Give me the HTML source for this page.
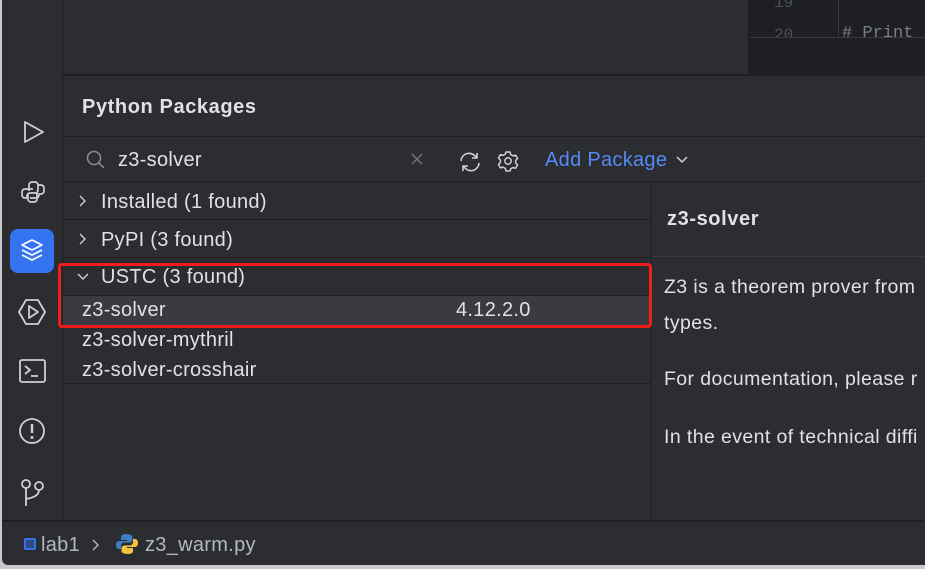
<!DOCTYPE html>
<html><head><style>
*{margin:0;padding:0;box-sizing:border-box}
body{width:925px;height:569px;background:#c8c9cc;position:relative;overflow:hidden;font-family:"Liberation Sans",sans-serif;color:#dfe1e5}
.win{position:absolute;left:2px;top:0;width:923px;height:565px;background:#2b2d30;border-bottom-left-radius:6px;overflow:hidden}
.abs{position:absolute}
.t{position:absolute;white-space:nowrap;font-size:20px;letter-spacing:0.3px}
.d{font-size:19.5px;letter-spacing:0.4px}
.hl{position:absolute;height:1px;background:#1e1f22}
svg{position:absolute;overflow:visible}
</style></head><body>
<div class="win">
 <div class="abs" style="left:60px;top:0;width:1px;height:520px;background:#1e1f22"></div>
 <div class="abs" style="left:746px;top:0;width:177px;height:74px;background:#1e1f22"></div>
 <div class="abs" style="left:836px;top:0;width:1px;height:38px;background:#393b40"></div>
 <div class="abs" style="left:748px;top:37px;width:175px;height:1px;background:#393b40"></div>
 <div class="t" style="left:772px;top:-6px;font-family:'Liberation Mono',monospace;font-size:16px;color:#4b5059;letter-spacing:0">19</div>
 <div class="t" style="left:772px;top:26px;font-family:'Liberation Mono',monospace;font-size:16px;color:#4b5059;height:11px;overflow:hidden;letter-spacing:0">20</div>
 <div class="t" style="left:840px;top:24px;font-family:'Liberation Mono',monospace;font-size:17px;color:#7a7e85;height:13px;overflow:hidden;letter-spacing:0"># Print</div>
 <div class="hl" style="left:61px;top:74px;width:862px;height:2px"></div>
 <div class="t" style="left:80px;top:96px;font-size:20px;font-weight:bold;letter-spacing:0.6px;color:#dfe1e5">Python Packages</div>
 <div class="hl" style="left:61px;top:136px;width:862px"></div>
 <svg style="left:84px;top:150px" width="20" height="20"><circle cx="8" cy="8" r="6.5" fill="none" stroke="#8c8f94" stroke-width="1.5"/><path d="M13 13l5 5" stroke="#8c8f94" stroke-width="1.5"/></svg>
 <div class="t" style="left:116px;top:149px">z3-solver</div>
 <svg style="left:409px;top:153px" width="12" height="12"><path d="M1 1l10 10M11 1L1 11" stroke="#6f737a" stroke-width="1.5"/></svg>
 <svg style="left:456px;top:151px" width="26" height="22"><path d="M3 10a8 8 0 0 1 14-5l2 2M21 12a8 8 0 0 1-14 5l-2-2" fill="none" stroke="#ced0d6" stroke-width="1.6"/><path d="M19 2v5h-5M5 20v-5h5" fill="none" stroke="#ced0d6" stroke-width="1.6"/></svg>
 <svg style="left:495px;top:150px" width="22" height="22"><circle cx="11" cy="11" r="3.2" fill="none" stroke="#ced0d6" stroke-width="1.5"/><path d="M9 2h4l.7 2.6 2.3 1.3 2.6-.8 2 3.4-2 1.9v2.6l2 1.9-2 3.4-2.6-.8-2.3 1.3L13 21H9l-.7-2.6-2.3-1.3-2.6.8-2-3.4 2-1.9V9.9l-2-1.9 2-3.4 2.6.8 2.3-1.3z" fill="none" stroke="#ced0d6" stroke-width="1.5" stroke-linejoin="round"/></svg>
 <div class="t" style="left:543px;top:149px;color:#548af7">Add Package</div>
 <svg style="left:674px;top:156px" width="12" height="8"><path d="M1 1l5 5 5-5" fill="none" stroke="#ced0d6" stroke-width="1.5"/></svg>
 <div class="hl" style="left:61px;top:181px;width:862px"></div>
 <div class="abs" style="left:649px;top:182px;width:1px;height:338px;background:#1e1f22"></div>
 <svg style="left:77px;top:195px" width="8" height="12"><path d="M1 1l5 5-5 5" fill="none" stroke="#ced0d6" stroke-width="1.4"/></svg>
 <div class="t" style="left:99px;top:191px">Installed (1 found)</div>
 <div class="hl" style="left:61px;top:219px;width:588px"></div>
 <svg style="left:77px;top:233px" width="8" height="12"><path d="M1 1l5 5-5 5" fill="none" stroke="#ced0d6" stroke-width="1.4"/></svg>
 <div class="t" style="left:99px;top:229px">PyPI (3 found)</div>
 <div class="hl" style="left:61px;top:257px;width:588px"></div>
 <svg style="left:75px;top:273px" width="12" height="8"><path d="M1 1l5 5 5-5" fill="none" stroke="#ced0d6" stroke-width="1.4"/></svg>
 <div class="t" style="left:99px;top:266px">USTC (3 found)</div>
 <div class="abs" style="left:61px;top:295px;width:588px;height:30px;background:#393b40;border-top:1px solid #1e1f22"></div>
 <div class="t" style="left:80px;top:299px">z3-solver</div>
 <div class="t" style="left:454px;top:299px">4.12.2.0</div>
 <div class="t" style="left:80px;top:329px">z3-solver-mythril</div>
 <div class="t" style="left:80px;top:359px">z3-solver-crosshair</div>
 <div class="hl" style="left:61px;top:383px;width:588px"></div>
 <div class="abs" style="left:56px;top:263px;width:594px;height:65px;border:3px solid #f01d1d;border-radius:4px"></div>
 <div class="t" style="left:665px;top:208px;font-weight:bold;font-size:20px;letter-spacing:0.6px">z3-solver</div>
 <div class="hl" style="left:650px;top:256px;width:273px;background:#393b40"></div>
 <div class="t d" style="left:662px;top:276px">Z3 is a theorem prover from</div>
 <div class="t d" style="left:662px;top:312px">types.</div>
 <div class="t d" style="left:662px;top:368px">For documentation, please r</div>
 <div class="t d" style="left:662px;top:426px">In the event of technical diffi</div>
 <div class="hl" style="left:0;top:520px;width:923px;height:2px"></div>
 <svg style="left:20px;top:119px" width="22" height="26"><path d="M3 3v20l18-10z" fill="none" stroke="#ced0d6" stroke-width="1.8" stroke-linejoin="round"/></svg>
 <svg style="left:18px;top:179px" width="26" height="26"><path d="M9 12V6a3 3 0 0 1 3-3h3a3 3 0 0 1 3 3v5a3 3 0 0 1-3 3h-5a3 3 0 0 0-3 3v2H5a3 3 0 0 1-3-3v-3a3 3 0 0 1 3-3h8M17 14v6a3 3 0 0 1-3 3h-3a3 3 0 0 1-3-3v-5M10 19h6a3 3 0 0 0 3-3v-1h2a3 3 0 0 0 3-3V9a3 3 0 0 0-3-3h-3" fill="none" stroke="#ced0d6" stroke-width="1.7"/></svg>
 <div class="abs" style="left:8px;top:229px;width:44px;height:44px;background:#3574f0;border-radius:8px"></div>
 <svg style="left:18px;top:238px" width="26" height="26"><path d="M12 2l10 5-10 5-10-5z" fill="none" stroke="#fff" stroke-width="1.8" stroke-linejoin="round"/><path d="M2 12l10 5 10-5M2 17l10 5 10-5" fill="none" stroke="#fff" stroke-width="1.8" stroke-linejoin="round"/></svg>
 <svg style="left:16px;top:298px" width="30" height="28"><path d="M8 2h12l7 12-7 12H8L1 14z" fill="none" stroke="#ced0d6" stroke-width="1.8" stroke-linejoin="round"/><path d="M11 8v12l9-6z" fill="none" stroke="#ced0d6" stroke-width="1.8" stroke-linejoin="round"/></svg>
 <svg style="left:17px;top:359px" width="28" height="26"><rect x="1" y="1" width="25" height="22" rx="2" fill="none" stroke="#ced0d6" stroke-width="1.8"/><path d="M6 7l5 4-5 4M12 17h7" fill="none" stroke="#ced0d6" stroke-width="1.8"/></svg>
 <svg style="left:17px;top:418px" width="28" height="28"><circle cx="13" cy="13" r="12" fill="none" stroke="#ced0d6" stroke-width="1.8"/><path d="M13 6v9" stroke="#ced0d6" stroke-width="2.4"/><circle cx="13" cy="19.5" r="1.5" fill="#ced0d6"/></svg>
 <svg style="left:18px;top:478px" width="28" height="30"><circle cx="6" cy="6" r="4" fill="none" stroke="#ced0d6" stroke-width="1.8"/><circle cx="19" cy="8" r="4" fill="none" stroke="#ced0d6" stroke-width="1.8"/><path d="M6 10v18M19 12c0 6-7 8-13 9" fill="none" stroke="#ced0d6" stroke-width="1.8"/></svg>
 <div class="abs" style="left:22px;top:538px;width:12px;height:12px;border:2px solid #3574f0;border-radius:2px;background:#2e4a80"></div>
 <div class="t" style="left:39px;top:534px;color:#b4b8bf">lab1</div>
 <svg style="left:90px;top:539px" width="8" height="12"><path d="M1 1l5 5-5 5" fill="none" stroke="#b4b8bf" stroke-width="1.4"/></svg>
 <svg style="left:114px;top:533px" width="22" height="22"><path d="M10 1c-4 0-5 1.5-5 3.5V7h6v1H3C1 8 0 10 0 12s1 4 3 4h2v-3c0-2 1.5-3.5 3.5-3.5h5c1.5 0 3-1.3 3-3V4.5C16.5 2.5 14 1 10 1z" fill="#3f7cc4"/><path d="M12 21c4 0 5-1.5 5-3.5V15h-6v-1h8c2 0 3-2 3-4s-1-4-3-4h-2v3c0 2-1.5 3.5-3.5 3.5h-5c-1.5 0-3 1.3-3 3v3C5.5 19.5 8 21 12 21z" fill="#f2c53d"/></svg>
 <div class="t" style="left:143px;top:534px;color:#b4b8bf">z3_warm.py</div>
</div>
</body></html>
